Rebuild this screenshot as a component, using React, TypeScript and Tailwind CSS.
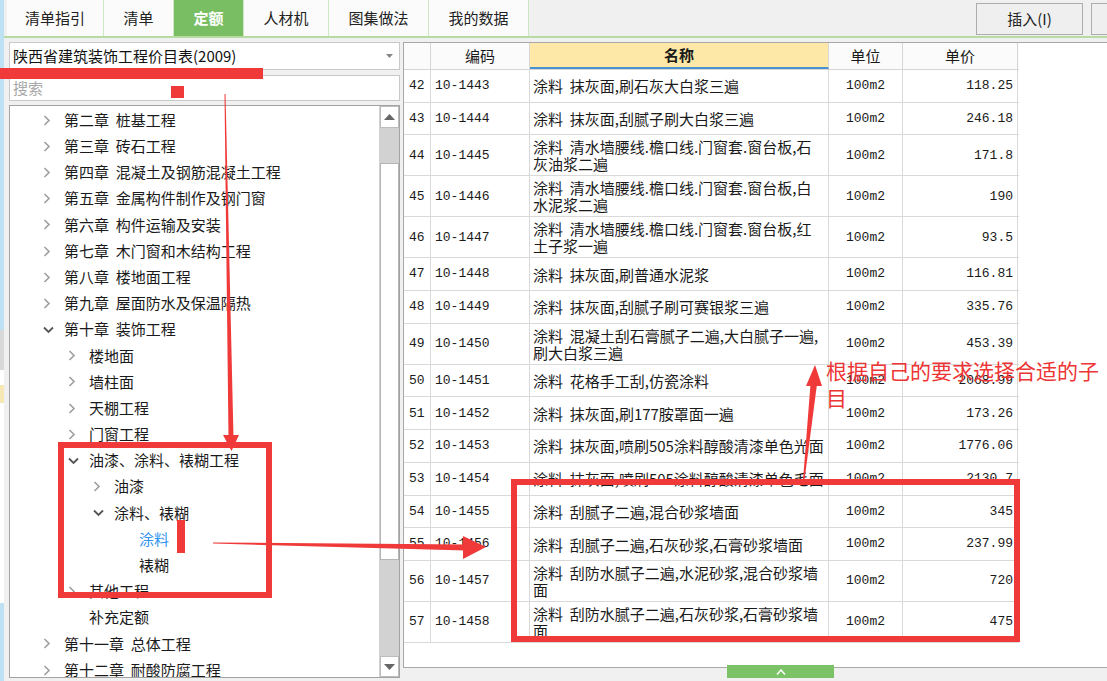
import React from "react";

const CJK = "font-['Noto_Sans_CJK_SC',sans-serif]";
const MONO = "font-['Liberation_Mono',monospace]";

const tabs = [
  { label: "清单指引", w: "w-[97px]" },
  { label: "清单", w: "w-[70px]" },
  { label: "定额", w: "w-[70px]", active: true },
  { label: "人材机", w: "w-[85px]" },
  { label: "图集做法", w: "w-[100px]" },
  { label: "我的数据", w: "w-[100px]" },
];

type Node = { level: number; label: string; state?: "open" | "closed"; active?: boolean };

const tree: Node[] = [
  { level: 0, label: "第二章  桩基工程", state: "closed" },
  { level: 0, label: "第三章  砖石工程", state: "closed" },
  { level: 0, label: "第四章  混凝土及钢筋混凝土工程", state: "closed" },
  { level: 0, label: "第五章  金属构件制作及钢门窗", state: "closed" },
  { level: 0, label: "第六章  构件运输及安装", state: "closed" },
  { level: 0, label: "第七章  木门窗和木结构工程", state: "closed" },
  { level: 0, label: "第八章  楼地面工程", state: "closed" },
  { level: 0, label: "第九章  屋面防水及保温隔热", state: "closed" },
  { level: 0, label: "第十章  装饰工程", state: "open" },
  { level: 1, label: "楼地面", state: "closed" },
  { level: 1, label: "墙柱面", state: "closed" },
  { level: 1, label: "天棚工程", state: "closed" },
  { level: 1, label: "门窗工程", state: "closed" },
  { level: 1, label: "油漆、涂料、裱糊工程", state: "open" },
  { level: 2, label: "油漆", state: "closed" },
  { level: 2, label: "涂料、裱糊", state: "open" },
  { level: 3, label: "涂料", active: true },
  { level: 3, label: "裱糊" },
  { level: 1, label: "其他工程", state: "closed" },
  { level: 1, label: "补充定额" },
  { level: 0, label: "第十一章  总体工程", state: "closed" },
  { level: 0, label: "第十二章  耐酸防腐工程", state: "closed" },
];

const indent = ["pl-[30px]", "pl-[55px]", "pl-[80px]", "pl-[105px]"];

type Row = { n: number; code: string; name: string[]; price: string };

const rows: Row[] = [
  { n: 42, code: "10-1443", name: ["涂料  抹灰面,刷石灰大白浆三遍"], price: "118.25" },
  { n: 43, code: "10-1444", name: ["涂料  抹灰面,刮腻子刷大白浆三遍"], price: "246.18" },
  { n: 44, code: "10-1445", name: ["涂料  清水墙腰线.檐口线.门窗套.窗台板,石", "灰油浆二遍"], price: "171.8" },
  { n: 45, code: "10-1446", name: ["涂料  清水墙腰线.檐口线.门窗套.窗台板,白", "水泥浆二遍"], price: "190" },
  { n: 46, code: "10-1447", name: ["涂料  清水墙腰线.檐口线.门窗套.窗台板,红", "土子浆一遍"], price: "93.5" },
  { n: 47, code: "10-1448", name: ["涂料  抹灰面,刷普通水泥浆"], price: "116.81" },
  { n: 48, code: "10-1449", name: ["涂料  抹灰面,刮腻子刷可赛银浆三遍"], price: "335.76" },
  { n: 49, code: "10-1450", name: ["涂料  混凝土刮石膏腻子二遍,大白腻子一遍,", "刷大白浆三遍"], price: "453.39" },
  { n: 50, code: "10-1451", name: ["涂料  花格手工刮,仿瓷涂料"], price: "2068.99" },
  { n: 51, code: "10-1452", name: ["涂料  抹灰面,刷177胺罩面一遍"], price: "173.26" },
  { n: 52, code: "10-1453", name: ["涂料  抹灰面,喷刷505涂料醇酸清漆单色光面"], price: "1776.06" },
  { n: 53, code: "10-1454", name: ["涂料  抹灰面,喷刷505涂料醇酸清漆单色毛面"], price: "2130.7" },
  { n: 54, code: "10-1455", name: ["涂料  刮腻子二遍,混合砂浆墙面"], price: "345" },
  { n: 55, code: "10-1456", name: ["涂料  刮腻子二遍,石灰砂浆,石膏砂浆墙面"], price: "237.99" },
  { n: 56, code: "10-1457", name: ["涂料  刮防水腻子二遍,水泥砂浆,混合砂浆墙", "面"], price: "720" },
  { n: 57, code: "10-1458", name: ["涂料  刮防水腻子二遍,石灰砂浆,石膏砂浆墙", "面"], price: "475" },
];

function ChevronRight() {
  return (
    <svg width="8" height="11" viewBox="0 0 8 11">
      <path d="M1.5 1 L6 5.5 L1.5 10" fill="none" stroke="#9e9e9e" strokeWidth="1.6" />
    </svg>
  );
}

function ChevronDown() {
  return (
    <svg width="11" height="8" viewBox="0 0 11 8">
      <path d="M1 1.5 L5.5 6 L10 1.5" fill="none" stroke="#555" strokeWidth="1.8" />
    </svg>
  );
}

function Arrow({ up }: { up?: boolean }) {
  return (
    <svg width="11" height="6" viewBox="0 0 11 6">
      <path d={up ? "M0 6 L5.5 0 L11 6 Z" : "M0 0 L5.5 6 L11 0 Z"} fill="#666" />
    </svg>
  );
}

function Tabs() {
  return (
    <div className="flex h-[38px] border-b-2 border-[#b6dba3] pl-[3px]">
      {tabs.map((t) => (
        <div
          key={t.label}
          className={`${t.w} flex items-center justify-center border-r border-[#cfe6c4] text-[15px] ${
            t.active ? "bg-[#79be63] font-bold text-white" : "bg-[#fbfbfb] text-[#222]"
          }`}
        >
          {t.label}
        </div>
      ))}
      <div className="flex-1" />
      <button className="mt-[3px] flex h-[32px] w-[107px] items-center justify-center border border-[#adadad] bg-[#efefef] text-[15px] text-[#222]">
        插入(I)
      </button>
      <div className="ml-[8px] mt-[3px] h-[32px] w-[16px] border border-r-0 border-[#adadad] bg-[#efefef]" />
    </div>
  );
}

function TreePanel() {
  return (
    <div className="ml-[5px] flex w-[391px] flex-col">
      <div className="flex h-[28px] items-center justify-between border border-[#c9c9c9] bg-white pl-[3px] pr-[6px] text-[15px] text-[#111]">
        <span>陕西省建筑装饰工程价目表(2009)</span>
        <svg width="7" height="4" viewBox="0 0 7 4">
          <path d="M0 0 L3.5 4 L7 0 Z" fill="#888" />
        </svg>
      </div>
      <div className="mt-[5px] flex h-[26px] items-center border border-[#c9c9c9] bg-white pl-[3px] text-[15px] text-[#a8a8a8]">
        搜索
      </div>
      <div className="mt-[4px] flex h-[573px] border border-[#a3a3a3] bg-white">
        <div className="flex-1 overflow-hidden pt-[1px]">
          {tree.map((n, i) => (
            <div key={i} className={`flex h-[26.2px] items-center ${indent[n.level]}`}>
              <div className="flex w-[24px] items-center pl-[3px]">
                {n.state === "closed" && <ChevronRight />}
                {n.state === "open" && <ChevronDown />}
              </div>
              <span
                className={`whitespace-pre text-[15px] ${n.active ? "text-[#2f93f0]" : "text-[#1a1a1a]"}`}
              >
                {n.label}
              </span>
            </div>
          ))}
        </div>
        <div className="flex w-[20px] flex-col border-l border-[#d2d2d2] bg-[#d2d2d2]">
          <div className="flex h-[22px] items-center justify-center border border-[#bdbdbd] bg-white">
            <Arrow up />
          </div>
          <div className="h-[35px]" />
          <div className="h-[397px] border border-[#b5b5b5] bg-white" />
          <div className="flex-1" />
          <div className="flex h-[21px] items-center justify-center border border-[#bdbdbd] bg-white">
            <Arrow />
          </div>
        </div>
      </div>
    </div>
  );
}

function Table() {
  return (
    <div className="w-[615px] text-[15px] text-[#1a1a1a]">
      <div className="flex h-[27px] border-b border-[#d6d6d6] bg-[#fbfbfb]">
        <div className="w-[27px] border-r border-[#d6d6d6]" />
        <div className="flex w-[99px] items-center justify-center border-r border-[#d6d6d6]">编码</div>
        <div className="flex w-[299px] items-center justify-center border-r border-b-2 border-r-[#d6d6d6] border-b-[#4a92cf] bg-[#fde8a8] font-bold">
          名称
        </div>
        <div className="flex w-[74px] items-center justify-center border-r border-[#d6d6d6]">单位</div>
        <div className="flex w-[115px] items-center justify-center border-r border-[#d6d6d6]">单价</div>
      </div>
      {rows.map((r) => (
        <div
          key={r.n}
          className={`flex border-b border-[#d9d9d9] ${r.name.length > 1 ? "h-[41px]" : "h-[32.7px]"}`}
        >
          <div className={`flex w-[27px] items-center border-r border-[#d9d9d9] pl-[5px] text-[13px] ${MONO}`}>
            {r.n}
          </div>
          <div className={`flex w-[99px] items-center border-r border-[#d9d9d9] pl-[4px] text-[13px] ${MONO}`}>
            {r.code}
          </div>
          <div className="flex w-[299px] flex-col justify-center border-r border-[#d9d9d9] pl-[3px] leading-[17px]">
            {r.name.map((l, i) => (
              <div key={i} className="whitespace-pre">
                {l}
              </div>
            ))}
          </div>
          <div className={`flex w-[74px] items-center justify-center border-r border-[#d9d9d9] text-[13px] ${MONO}`}>
            100m2
          </div>
          <div className={`flex w-[115px] items-center justify-end border-r border-[#d9d9d9] pr-[4px] text-[13px] ${MONO}`}>
            {r.price}
          </div>
        </div>
      ))}
    </div>
  );
}

function Annotations() {
  const red = "#f03a3a";
  return (
    <>
      <svg className="pointer-events-none absolute left-0 top-0" width="1107" height="681">
        <rect x="0" y="68" width="263" height="11" fill={red} />
        <rect x="171" y="86" width="13" height="12" fill={red} />
        <polygon points="224.5,94 225.5,94 233.5,438 228.5,438" fill={red} />
        <polygon points="223,435 239,435 231.5,451" fill={red} />
        <rect x="61" y="445" width="208" height="150" fill="none" stroke={red} strokeWidth="6" />
        <rect x="177" y="520" width="8" height="33" fill={red} />
        <polygon points="213,542.5 466,544.5 466,550.5 213,543.5" fill={red} />
        <polygon points="463,536 463,559 486,547" fill={red} />
        <rect x="514" y="482" width="503" height="157" fill="none" stroke={red} strokeWidth="6" />
        <polygon points="803,480 804.5,480 817,384 810.5,384" fill={red} />
        <polygon points="806,386 822,386 815,365" fill={red} />
      </svg>
      <div className="pointer-events-none absolute left-[826px] top-[357px] w-[285px] text-[21px] leading-[27px] text-[#ee3535]">
        根据自己的要求选择合适的子目
      </div>
    </>
  );
}

export default function App() {
  return (
    <div className={`relative flex h-[681px] w-[1107px] overflow-hidden bg-[#f0f0f0] ${CJK}`}>
      {/* sliver of the window behind */}
      <div className="flex w-[4px] flex-col bg-[#bfe1f4]">
        <div className="h-[330px]" />
        <div className="h-[40px] bg-[#d8d8d8]" />
        <div className="h-[15px] bg-white" />
        <div className="h-[18px] bg-[#f6e8b5]" />
        <div className="h-[200px] bg-white" />
      </div>
      <div className="flex flex-1 flex-col">
        <Tabs />
        <div className="flex pt-[4px]">
          <TreePanel />
          <div className="ml-[3px] flex h-[626px] flex-1 flex-col border border-r-0 border-[#a8a8a8] bg-white">
            <Table />
          </div>
        </div>
        <div className="flex pl-[723px]">
          <div className="mt-[-13px] flex h-[13px] w-[107px] items-center justify-center bg-[#7cc267]">
            <svg width="10" height="6" viewBox="0 0 10 6">
              <path d="M1 5.5 L5 1 L9 5.5" fill="none" stroke="#fff" strokeWidth="1.5" />
            </svg>
          </div>
        </div>
      </div>
      <Annotations />
    </div>
  );
}
